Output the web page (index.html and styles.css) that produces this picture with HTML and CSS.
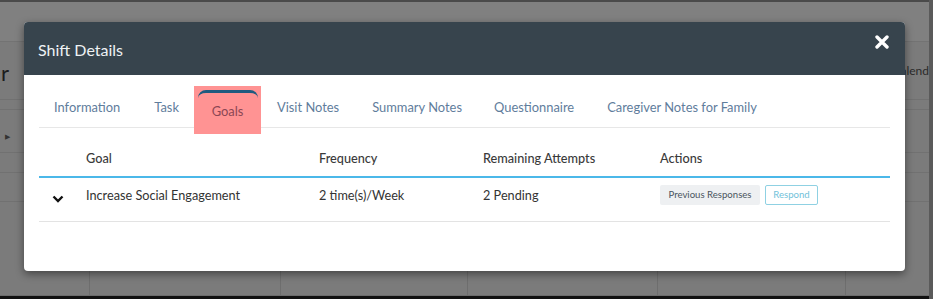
FILE: index.html
```html
<!DOCTYPE html>
<html>
<head>
<meta charset="utf-8">
<link rel="stylesheet" href="styles.css">
</head>
<body>
<div class="page">
  <div class="bg">
    <div class="bg-top"></div>
    <div class="bg-row r1"><span class="bg-big">r</span><span class="bg-right">alend</span></div>
    <div class="bg-row r2"></div>
    <div class="bg-row r3"></div>
    <div class="bg-row r4"><span class="bg-arrow">&#9654;</span></div>
    <div class="bg-row r5"></div>
    <div class="bg-row r6"></div>
    <div class="bg-cols">
      <div class="bg-col w1"></div><div class="bg-col w2"></div><div class="bg-col w3"></div><div class="bg-col w4"></div><div class="bg-col w5"></div><div class="bg-col w6"></div>
    </div>
    <div class="bg-bottom"></div>
  </div>

  <div class="modal">
    <div class="modal-header">
      <span class="modal-title">Shift Details</span>
      <svg class="close" viewBox="0 0 14 14" width="14" height="14"><path d="M2 2 L12 12 M12 2 L2 12" stroke="#fff" stroke-width="3.4" stroke-linecap="round"/></svg>
    </div>
    <div class="modal-body">
      <div class="tabs">
        <span class="tab t-info">Information</span>
        <span class="tab t-task">Task</span>
        <span class="tab t-goals active"><span class="tab-top"></span>Goals</span>
        <span class="tab t-visit">Visit Notes</span>
        <span class="tab t-summary">Summary Notes</span>
        <span class="tab t-quest">Questionnaire</span>
        <span class="tab t-care">Caregiver Notes for Family</span>
      </div>
      <div class="table">
        <div class="thead">
          <span class="c0"></span>
          <span class="c1">Goal</span>
          <span class="c2">Frequency</span>
          <span class="c3">Remaining Attempts</span>
          <span class="c4">Actions</span>
        </div>
        <div class="trow">
          <span class="c0"><svg viewBox="0 0 12 8" width="12" height="8"><path d="M1.5 1.5 L6 6 L10.5 1.5" fill="none" stroke="#111" stroke-width="2.4"/></svg></span>
          <span class="c1">Increase Social Engagement</span>
          <span class="c2">2 time(s)/Week</span>
          <span class="c3">2 Pending</span>
          <span class="c4 actions"><span class="btn prev">Previous Responses</span><span class="btn respond">Respond</span></span>
        </div>
      </div>
    </div>
  </div>
</div>
</body>
</html>
```
FILE: styles.css
```css
* { box-sizing: border-box; }
html, body { margin: 0; padding: 0; }
body {
  width: 933px;
  height: 299px;
  overflow: hidden;
  background: #7c7c7c;
  font-family: Lato, "Open Sans", sans-serif;
}
.page { position: relative; width: 933px; height: 299px; }

/* background page under overlay */
.bg {
  width: 933px;
  height: 299px;
  display: flex;
  flex-direction: column;
  background: #7b7b7b;
  border-right: 4px solid #5a5a5a;
}
.bg-top {
  height: 42px;
  background: #808080;
  border-top: 2px solid #4a4a4a;
  border-bottom: 1px solid #737373;
}
.bg-row { border-bottom: 1px solid #717171; display: flex; align-items: center; justify-content: space-between; }
.r1 { height: 58px; }
.r2 { height: 10px; }
.r3 { height: 10px; border-bottom: none; }
.r4 { height: 33px; }
.r5 { height: 20px; }
.r6 { height: 29px; }
.bg-big { font-size: 22px; color: #1d1d1d; margin-left: 1px; margin-top: 4px; }
.bg-right { font-size: 12px; color: #2a2a2a; margin-top: 0; }
.bg-arrow { font-size: 7px; color: #333; margin-left: 5px; }
.bg-cols { flex: 1; display: flex; border-bottom: 1px solid #6c6c6c; }
.bg-col { flex-shrink: 0; border-right: 1px solid #6e6e6e; }
.w1 { width: 90px; }
.w2 { width: 191px; }
.w3 { width: 187px; }
.w4 { width: 190px; }
.w5 { width: 188px; }
.w6 { width: 80px; border-right: none; }
.bg-bottom { height: 3px; background: #111; }

/* modal */
.modal {
  position: absolute;
  left: 24px;
  top: 22px;
  width: 881px;
  height: 249px;
  background: #fff;
  border-radius: 4px;
  overflow: hidden;
  box-shadow: 0 3px 8px rgba(0,0,0,0.45);
}
.modal-header {
  height: 53px;
  background: #37444d;
  display: flex;
  align-items: center;
  justify-content: space-between;
  padding: 0 16px 0 14px;
}
.modal-title { color: #eef2f4; font-size: 16px; font-weight: 400; margin-top: 1px; }
.close { margin-top: -13px; }

.modal-body { padding: 13px 15px 0 15px; }
.tabs {
  height: 40px;
  display: flex;
  align-items: stretch;
  border-bottom: 1px solid #e7e7e7;
  font-size: 12.9px;
  color: #5f7d9c;
}
.tab { display: flex; align-items: center; padding-bottom: 2px; position: relative; white-space: nowrap; flex-shrink: 0; }
.t-info { margin-left: 15px; }
.t-task { margin-left: 34px; }
.t-goals { margin-left: 15px; width: 67px; justify-content: center; }
.t-visit { margin-left: 16px; }
.t-summary { margin-left: 33px; }
.t-quest { margin-left: 32px; }
.t-care { margin-left: 33px; }
.tab.active {
  background: #ff9393;
  color: #8a4654;
  margin-top: -2px;
  height: 48px;
  align-self: flex-start;
  padding-top: 4px;
}
.tab-top {
  position: absolute;
  left: 4px;
  right: 3px;
  top: 4px;
  height: 8px;
  border-top: 3px solid #1f5b80;
  border-radius: 8px 8px 0 0;
}

.table { font-size: 12.7px; color: #333; }
.thead, .trow { display: flex; align-items: center; }
.thead { height: 50px; border-bottom: 2px solid #4bb8e9; padding-top: 12px; font-weight: 500; color: #3a3a3a; }
.trow { height: 44px; border-bottom: 1px solid #e3e3e3; padding-bottom: 10px; padding-top: 0; }
.c0 { width: 47px; display: flex; justify-content: flex-start; padding-left: 13px; padding-top: 9px; }
.c1 { width: 233px; }
.c2 { width: 164px; }
.c3 { width: 177px; }
.c4 { flex: 1; }
.actions { display: flex; gap: 5px; }
.btn { font-size: 9.6px; height: 20px; display: flex; align-items: center; border-radius: 2px; white-space: nowrap; flex-shrink: 0; }
.prev { background: #eef0f2; color: #4a5560; width: 100px; justify-content: center; }
.respond { border: 1px solid #8fd1e3; color: #72c2da; width: 53px; justify-content: center; }
```
